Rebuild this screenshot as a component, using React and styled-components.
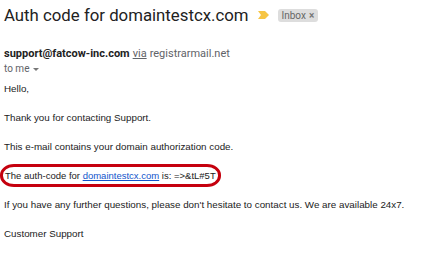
import React from "react";
import styled, { createGlobalStyle } from "styled-components";

const Global = createGlobalStyle`
  html, body { margin: 0; padding: 0; background: #fff; }
  body { width: 437px; height: 256px; overflow: hidden; }
`;

const Page = styled.div`
  padding: 0 0 0 4px;
`;

const Header = styled.div`
  display: flex;
  align-items: center;
  height: 30px;
`;

const Subject = styled.h2`
  margin: 0;
  font-family: Roboto, "Open Sans", sans-serif;
  font-weight: 400;
  font-size: 16.8px;
  color: #222;
`;

const Marker = styled.svg`
  margin-left: 9px;
  flex: none;
`;

const Label = styled.span`
  margin-left: 9px;
  display: inline-flex;
  align-items: center;
  gap: 3px;
  background: #ddd;
  color: #666;
  border-radius: 3px;
  padding: 0 4px;
  height: 13px;
  font-family: Roboto, sans-serif;
  font-size: 10px;
  line-height: 13px;
`;

const Close = styled.span`
  font-size: 10px;
  color: #777;
  font-weight: 700;
`;

const Sender = styled.div`
  margin-top: 16px;
  font-family: Roboto, sans-serif;
  font-size: 11px;
  line-height: 16px;
  color: #5f6368;
  display: flex;
  align-items: baseline;
  gap: 3px;
`;

const From = styled.b`
  color: #222;
  font-weight: 700;
`;

const Via = styled.u`
  color: #5f6368;
`;

const To = styled.div`
  font-family: Roboto, sans-serif;
  font-size: 10px;
  line-height: 14px;
  color: #5f6368;
  display: flex;
  align-items: center;
  gap: 4px;
`;

const Caret = styled.span`
  width: 0;
  height: 0;
  border-left: 3px solid transparent;
  border-right: 3px solid transparent;
  border-top: 3px solid #777;
`;

const Body = styled.div`
  margin-top: 5px;
  font-family: "Liberation Sans", Arial, sans-serif;
  font-size: 9.8px;
  line-height: 15px;
  color: #222;
`;

const P = styled.p`
  margin: 0 0 14px 0;
`;

const Circled = styled.p`
  margin: -4px 0 10px -4px;
  display: inline-block;
  border: 3px solid #c5000e;
  border-radius: 14px / 11px;
  padding: 1px 2px;
  font-size: 9.5px;
  line-height: 15px;
`;

const Link = styled.a`
  color: #15c;
  text-decoration: underline;
`;

export default function App() {
  return (
    <>
      <Global />
      <Page>
        <Header>
          <Subject>Auth code for domaintestcx.com</Subject>
          <Marker width="11" height="8" viewBox="0 0 11 8">
            <path d="M0 0 H7 L11 4 L7 8 H0 L3 4 Z" fill="#f6c544" />
          </Marker>
          <Label>
            Inbox <Close>×</Close>
          </Label>
        </Header>
        <Sender>
          <From>support@fatcow-inc.com</From>
          <Via>via</Via>
          <span>registrarmail.net</span>
        </Sender>
        <To>
          to me <Caret />
        </To>
        <Body>
          <P>Hello,</P>
          <P>Thank you for contacting Support.</P>
          <P>This e-mail contains your domain authorization code.</P>
          <Circled>
            The auth-code for <Link href="#">domaintestcx.com</Link> is: =&gt;&amp;tL#5T
          </Circled>
          <P>If you have any further questions, please don't hesitate to contact us. We are available 24x7.</P>
          <P>Customer Support</P>
        </Body>
      </Page>
    </>
  );
}
